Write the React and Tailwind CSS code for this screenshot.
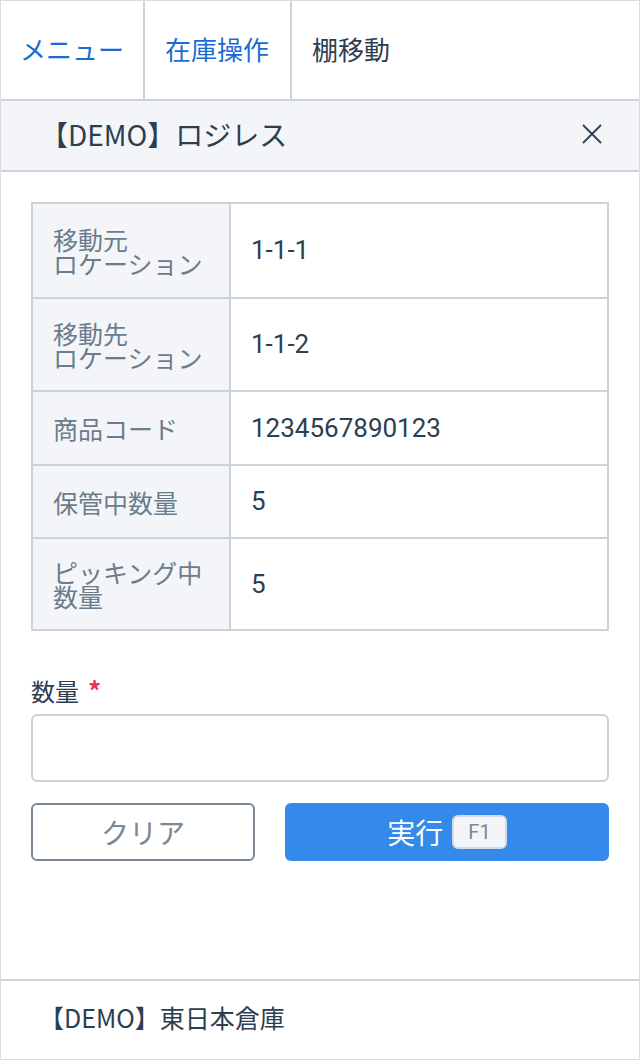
const jp = { fontFamily: "'Noto Sans CJK JP', 'Noto Sans', sans-serif" };
const num = { fontFamily: "Roboto, 'Noto Sans CJK JP', sans-serif" };

const rows = [
  { label: ['移動元', 'ロケーション'], value: '1-1-1', h: 'h-[93px]' },
  { label: ['移動先', 'ロケーション'], value: '1-1-2', h: 'h-[91px]' },
  { label: ['商品コード'], value: '1234567890123', h: 'h-[72px]' },
  { label: ['保管中数量'], value: '5', h: 'h-[71px]' },
  { label: ['ピッキング中', '数量'], value: '5', h: 'h-[90px]' },
];

export default function App() {
  return (
    <div className="w-[640px] h-[1060px] border border-[#d9dcdf] bg-white flex flex-col text-[#2c3e50]" style={jp}>
      {/* tabs */}
      <div className="flex h-[100px] border-b-2 border-[#ccd4d9] shrink-0">
        <div className="flex items-center px-[19px] pb-[4px] border-r-2 border-[#ccd4d9] text-[26px] text-[#1a6dce]">メニュー</div>
        <div className="flex items-center pl-[20px] pr-[21px] pb-[4px] border-r-2 border-[#ccd4d9] text-[26px] text-[#1a6dce]">在庫操作</div>
        <div className="flex items-center px-[20px] pb-[4px] text-[26px]">棚移動</div>
      </div>

      {/* title bar */}
      <div className="flex items-center justify-between h-[71px] bg-[#f3f5f9] border-b-2 border-[#ccd4d9] pl-[39px] pr-[37px] pb-[3px] shrink-0">
        <span className="text-[28px]">【DEMO】ロジレス</span>
        <svg width="20" height="20" viewBox="0 0 20 20" className="text-[#2c3e50]">
          <path d="M1 1L19 19M19 1L1 19" stroke="currentColor" strokeWidth="1.8" fill="none" />
        </svg>
      </div>

      <div className="px-[30px] pt-[30px] flex flex-col">
        <div className="border-2 border-[#c9d3d8] flex flex-col">
          {rows.map((r, i) => (
            <div key={i} className={`flex ${r.h} ${i > 0 ? 'border-t-2 border-[#c9d3d8]' : ''} box-content`}>
              <div className="w-[198px] shrink-0 bg-[#f3f5f9] border-r-2 border-[#c9d3d8] flex flex-col justify-center pl-[20px] text-[25px] leading-[24px] text-[#6b7c8b]">
                {r.label.map((l) => (
                  <div key={l}>{l}</div>
                ))}
              </div>
              <div className="flex items-center pl-[20px] text-[26px]" style={num}>{r.value}</div>
            </div>
          ))}
        </div>

        <label className="mt-[46px] text-[24px] leading-[28px] flex items-start gap-[9px]">
          数量<span className="text-[#e8344e] text-[26px] leading-[26px] font-bold">*</span>
        </label>
        <input className="mt-[9px] h-[68px] border-2 border-[#c9d3d8] rounded-[6px] px-4 text-[22px] outline-none" />

        <div className="flex gap-[30px] mt-[21px]">
          <button className="w-[224px] h-[58px] border-2 border-[#7b8794] rounded-[6px] text-[28px] text-[#7b8794] flex items-center justify-center">
            クリア
          </button>
          <button className="flex-1 h-[58px] bg-[#338aeb] rounded-[6px] text-[28px] text-white flex items-center justify-center gap-[9px]">
            実行
            <span className="h-[34px] px-[14px] bg-[#f3f5f9] border-2 border-[#d5dbe0] rounded-[6px] text-[20px] text-[#7b8794] flex items-center" style={num}>F1</span>
          </button>
        </div>
      </div>

      <div className="mt-auto h-[80px] border-t-2 border-[#ccd4d9] flex items-center pl-[38px] pb-[4px] text-[25px] shrink-0">
        【DEMO】東日本倉庫
      </div>
    </div>
  );
}
